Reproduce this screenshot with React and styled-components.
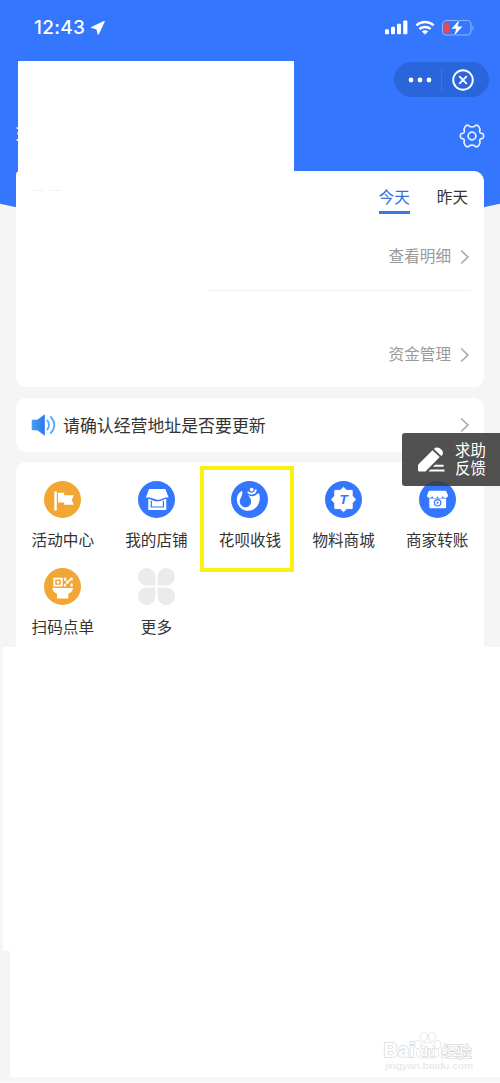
import React from 'react'
import styled, { createGlobalStyle } from 'styled-components'

const BLUE = '#3477fe'
const ORANGE = '#f2a634'

const App = () => {
  return (
    <Page>
      <GlobalStyle />
      <Header>
        <StatusBar>
          <Clock>12:43</Clock>
          <LocationIcon />
          <StatusIcons />
        </StatusBar>
        <TopRow>
          <NameEdge>
            <svg width="3" height="18" viewBox="0 0 3 18" fill="#dfe9ff">
              <circle cx="1.3" cy="3" r="1" />
              <circle cx="2.1" cy="8.5" r="1" />
              <circle cx="1.4" cy="15" r="1.1" />
            </svg>
          </NameEdge>
          <BlankPanel />
          <Actions>
            <Capsule>
              <DotsIcon />
              <i />
              <CloseIcon />
            </Capsule>
            <GearIcon />
          </Actions>
        </TopRow>
      </Header>

      <SummaryCard>
        <Tabs>
          <FaintMark><span /><span /></FaintMark>
          <Tab $active>今天</Tab>
          <Tab>昨天</Tab>
        </Tabs>
        <LinkRow $height={67}><span>查看明细</span> <Chevron /></LinkRow>
        <Divider />
        <LinkRow $height={127}><span>资金管理</span> <Chevron /></LinkRow>
      </SummaryCard>

      <NoticeCard>
        <SpeakerIcon />
        <p>请确认经营地址是否要更新</p>
        <Chevron />
      </NoticeCard>

      <TileCard>
        {tiles.map(({ label, Icon, marked }) => (
          <Tile key={label} $marked={marked}>
            <Icon />
            <span>{label}</span>
          </Tile>
        ))}
      </TileCard>

      <BlankBlock $left={3} $height={304} />
      <BlankBlock $left={10} $height={126} />
      <BottomLine />

      <HelpBadge>
        <PencilIcon />
        <span>求助<br />反馈</span>
      </HelpBadge>
      <Watermark />
    </Page>
  )
}

/* icons */

const LocationIcon = () => (
  <svg width="14" height="14" viewBox="0 0 14 14">
    <path d="M13.200.6 7.200 13.200 6 8 .6 6.500Z" fill="#fff" stroke="#fff" strokeWidth="1.200" strokeLinejoin="round" />
  </svg>
)

const StatusIcons = () => (
  <svg className="status" width="92" height="18" viewBox="0 0 92 18">
    <g fill="#fff">
      <rect x="1" y="10.3" width="4" height="5" rx="1.1" />
      <rect x="7" y="7.8" width="4" height="7.5" rx="1.1" />
      <rect x="13" y="4.7" width="4" height="10.6" rx="1.1" />
      <rect x="19.200" y="1.500" width="4.200" height="13.800" rx="1.100" />
      <path d="m41 15.600-3.200-3.200c1.700-1.500 4.700-1.500 6.400 0Z" />
    </g>
    <g fill="none" stroke="#fff" strokeWidth="2.500">
      <path d="M32.400 6.400c4.900-4.500 12.300-4.500 17.200 0" />
      <path d="M35.400 10c3.100-2.800 8.100-2.800 11.200 0" />
    </g>
    <rect x="58.500" y="1.500" width="28.500" height="14.500" rx="4" fill="none" stroke="#8db3ff" strokeWidth="1.100" />
    <path d="M88.500 6.700v4.400c1.700-.7 1.700-3.700 0-4.400" fill="#8db3ff" />
    <rect x="60.300" y="3.400" width="5" height="10.800" rx="1.800" fill="#f0474f" />
    <path d="M75.500.8 67.500 9.700h4.800l-2.200 7 8.300-9.200h-5Z" fill="#fff" stroke={BLUE} strokeWidth="1.600" paintOrder="stroke" />
  </svg>
)

const DotsIcon = () => (
  <svg width="24" height="6" viewBox="0 0 24 6" fill="#fff">
    <circle cx="3" cy="3" r="2.400" />
    <circle cx="12" cy="3" r="2.400" />
    <circle cx="21" cy="3" r="2.400" />
  </svg>
)

const CloseIcon = () => (
  <svg width="22" height="22" viewBox="0 0 22 22" fill="none" stroke="#fff" strokeWidth="1.900">
    <circle cx="11" cy="11" r="9.800" />
    <path d="m7.700 7.700 6.600 6.600M14.300 7.700l-6.600 6.600" strokeLinecap="round" />
  </svg>
)

const GearIcon = () => (
  <svg className="gear" width="26" height="26" viewBox="0 0 26 26" fill="none" stroke="#e9f1ff" strokeWidth="1.700" strokeLinejoin="round">
    <path d="M7.500 2.300h2c1.100 2.200 5.900 2.200 7 0h2q1.200.5 2.600 3.900c-1.200 2.600-.2 4.300 2.700 4.500 1 .2 1 4.400 0 4.600-2.900.2-3.900 1.900-2.700 4.500q-1.400 3.400-2.600 3.900h-2c-1.100-2.200-5.900-2.200-7 0h-2q-1.200-.5-2.600-3.900c1.200-2.600.2-4.300-2.700-4.500-1-.2-1-4.400 0-4.600 2.900-.2 3.900-1.900 2.700-4.500q1.400-3.400 2.600-3.900Z" />
    <circle cx="13" cy="13" r="3.900" />
  </svg>
)

const Chevron = () => (
  <svg className="chevron" width="10" height="16" viewBox="0 0 10 16" fill="none" stroke="#aaa" strokeWidth="1.700">
    <path d="m1.200 1.500 6.700 6.500-6.700 6.500" />
  </svg>
)

const SpeakerIcon = () => (
  <svg width="26" height="24" viewBox="0 0 26 24">
    <defs>
      <linearGradient id="speaker" x2="1">
        <stop stopColor="#4a9cfa" />
        <stop offset="1" stopColor="#2979ec" />
      </linearGradient>
    </defs>
    <path d="M1.500 6.800h4.800l7.500-5.500v21.400l-7.500-5.500H1.500q-.8 0-.8-.8V7.600q0-.8.8-.8Z" fill="url(#speaker)" />
    <path d="M16.300 7.500c2.300 2.500 2.300 6.500 0 9M19.800 4c4.600 4.500 4.600 11.500 0 16" fill="none" stroke="#5bb0fa" strokeWidth="1.900" strokeLinecap="round" />
  </svg>
)

const Disc = ({ color, children }) => (
  <svg width="37" height="37" viewBox="0 0 37 37">
    <circle cx="18.500" cy="18.500" r="18.500" fill={color} />
    {children}
  </svg>
)

const FlagIcon = () => (
  <Disc color={ORANGE}>
    <path d="M10.300 10.500h2.500v19h-2.500ZM14 11.700h6.200v2.600H30l-2.300 4.900 2.300 4.600h-9.800v-2.400H14Z" fill="#fff" />
  </Disc>
)

const ShopIcon = () => (
  <Disc color={BLUE}>
    <path d="M11 8h16.400l3.200 8.600c-2.700-.2-4.500.2-6.400 1.200-2.500 1.300-5.500 1.300-8.300 0-2.400-1.200-4.900-1.500-8-1.200Z" fill="#fff" />
    <path d="M10.300 17.900c3 0 4.300 2.300 9 2.300s6.200-2.300 9-2.300v11h-18Z" fill="#fff" />
    <path d="M13.300 19.800v6.200h12.100v-6.200" fill="none" stroke={BLUE} strokeWidth="1.200" />
  </Disc>
)

const HuabeiIcon = () => (
  <Disc color={BLUE}>
    <path d="M9.900 10.400C5.800 13.200 4.900 18.400 6.700 22.800c2.400 6.200 9.300 8.600 15 6 5.500-2.600 8-8.600 6.800-14.800-.3-1.600-1.700-1.800-2.700-.8-2.600 2.600-6.200 2.700-9.800.4 3.100 2.100 4.700 5.400 4 8.400-.9 3.700-4.700 5.300-7.900 3.800-3.200-1.500-4.200-5-2.600-8.300 1.300-2.700 1.900-4.500 1.900-6.100 0-1.200-.7-1.700-1.500-1Z" fill="#fff" />
    <path d="M17.300 11.300c1.500 2.400 6.900 1.700 7.600-2.300" fill="none" stroke="#fff" strokeWidth="1.700" strokeLinecap="round" />
    <circle cx="20.700" cy="8.600" r="1.900" fill="#fff" />
  </Disc>
)

const MaterialIcon = () => (
  <Disc color={BLUE}>
    <path
      d="m18.500 6.300 3.300 3.100h5.400v5.400l3.300 3.700-3.300 3.700v5.400h-5.400l-3.300 3.100-3.300-3.100H9.800v-5.400l-3.300-3.700 3.300-3.700V9.400h5.400Z"
      fill="#fff" stroke="#fff" strokeLinejoin="round"
    />
    <text x="18.500" y="23" textAnchor="middle" fill={BLUE} fontFamily="Liberation Sans, sans-serif" fontSize="13.500" fontWeight="700" fontStyle="italic">T</text>
  </Disc>
)

const TransferIcon = () => (
  <Disc color={BLUE}>
    <path d="M10 9.800h17l1.900 4.300a2.600 2.600 0 0 1-5.200.5 2.600 2.600 0 0 1-5.200 0 2.600 2.600 0 0 1-5.200 0 2.600 2.600 0 0 1-5.200-.5Z" fill="#fff" />
    <path d="M10.300 17.600h16.800v8.400q0 1.200-1.200 1.200H11.500q-1.200 0-1.200-1.200Z" fill="#fff" />
    <circle cx="18.600" cy="21.800" r="3.200" fill="none" stroke={BLUE} strokeWidth="1.200" />
    <path d="M17.300 21.800h2.600M18.600 20.300v3" stroke={BLUE} strokeWidth=".8" />
  </Disc>
)

const BowlIcon = () => (
  <Disc color={ORANGE}>
    <path d="M10.300 10.600h7.500v7.100h-7.500Z" fill="none" stroke="#fff" strokeWidth="1.800" />
    <path d="M12.800 12.900h2.500v2.500h-2.500ZM20 9.800h2.200v3H20ZM22.200 12.800h2.300v3h-2.300ZM20 15.800h2.200v2.700H20ZM26 9.800h2.700v2.500H26ZM24.500 11.500h2v2h-2ZM26.500 15.500h2.200v3h-2.200Z" fill="#fff" />
    <path d="M8.300 20h20.600c-.2 3-1.700 4.700-4.600 5.800v4.700H13v-4.700c-2.900-1.100-4.500-2.800-4.700-5.800Z" fill="#fff" />
  </Disc>
)

const MoreIcon = () => (
  <svg width="37" height="37" viewBox="0 0 37 37" fill="#ebebeb">
    <path d="M8.800 0a8.700 8.700 0 0 1 8.700 8.700v8.800H8.800A8.750 8.750 0 0 1 8.800 0Z" />
    <path d="M28.200 0a8.750 8.750 0 0 1 0 17.500h-8.700V8.700A8.700 8.700 0 0 1 28.200 0Z" />
    <path d="M8.800 19.500h8.700v8.800A8.750 8.750 0 1 1 8.800 19.500Z" />
    <path d="M19.500 19.500h8.700a8.750 8.750 0 1 1-8.700 8.800Z" />
  </svg>
)

const PencilIcon = () => (
  <svg width="28" height="28" viewBox="0 0 28 28" fill="#fff">
    <path d="M15.500 4.300 22.700 11 8.500 25.400H2.200q-1.200 0-1.200-1.200v-5.500Z" />
    <path d="M17 3.100c3.700-5 12.700 3.100 7.200 6.800Z" />
    <path d="M18 18.700h8.600v2.100H16ZM13.500 23.400h14v2.200H11.500Z" />
  </svg>
)

const tiles = [
  { label: '活动中心', Icon: FlagIcon },
  { label: '我的店铺', Icon: ShopIcon },
  { label: '花呗收钱', Icon: HuabeiIcon, marked: true },
  { label: '物料商城', Icon: MaterialIcon },
  { label: '商家转账', Icon: TransferIcon },
  { label: '扫码点单', Icon: BowlIcon },
  { label: '更多', Icon: MoreIcon },
]

const Watermark = () => (
  <WatermarkBox width="96" height="48" viewBox="0 0 96 48">
    <g fill="#fff" stroke="#e0e0e0" strokeWidth=".8">
      <ellipse cx="37" cy="19.500" rx="3.300" ry="4.300" />
      <ellipse cx="42.800" cy="11.800" rx="3.500" ry="4.700" />
      <ellipse cx="50.800" cy="11.800" rx="3.500" ry="4.700" />
      <ellipse cx="56.500" cy="19.500" rx="3.300" ry="4.300" />
      <path d="M46.800 17.500c4.500 0 5.500 4 9 7 4 3.600 2 8.500-3 8.500H40.500c-5 0-7-5-3-8.500 3.500-3 4.800-7 9.300-7Z" />
    </g>
    <g fill="#fff" stroke="#d8d8d8" strokeWidth="1.400" paintOrder="stroke">
      <text x="2.500" y="32" fontSize="19.500" fontWeight="700" textLength="31" lengthAdjust="spacingAndGlyphs">Bai</text>
      <text x="39.500" y="31" fontSize="12.500" fontWeight="700" textLength="14.500" lengthAdjust="spacingAndGlyphs">du</text>
      <text x="60.500" y="31.500" fontSize="15" textLength="30" fontWeight="500">经验</text>
    </g>
    <text x="4" y="44" fontSize="9.500" fill="#e4e4e4" textLength="88" lengthAdjust="spacingAndGlyphs">jingyan.baidu.com</text>
  </WatermarkBox>
)

/* styles */

const GlobalStyle = createGlobalStyle`
  body {
    margin: 0;
    background: #f5f5f5;
  }
  *, *::before, *::after {
    box-sizing: border-box;
  }
  svg {
    display: block;
    flex: none;
  }
  p {
    margin: 0;
  }
`

const Page = styled.div`
  position: relative;
  width: 500px;
  height: 1083px;
  overflow: hidden;
  display: flex;
  flex-direction: column;
  background: #f5f5f5;
  color: #333;
  font-family: 'Liberation Sans', 'Noto Sans CJK SC', sans-serif;
  z-index: 0;
`

const Header = styled.header`
  height: 171px;
  flex: none;
  &::before {
    content: '';
    position: absolute;
    top: 0;
    left: 0;
    z-index: -1;
    width: 100%;
    height: 232px;
    background: ${BLUE};
    clip-path: circle(1163px at 50% -932px);
  }
`

const StatusBar = styled.div`
  display: flex;
  height: 61px;
  padding: 0 24px 6px 34px;
  align-items: center;
  gap: 6px;
  .status {
    margin-left: auto;
  }
`

const Clock = styled.span`
  width: 51px;
  color: #fff;
  font: 500 19px/22px Inter, sans-serif;
  letter-spacing: 0.3px;
`

const TopRow = styled.div`
  display: flex;
  height: 110px;
  padding-left: 16px;
`

const NameEdge = styled.div`
  width: 2px;
  padding-top: 64px;
  overflow: hidden;
`

const BlankPanel = styled.div`
  width: 276px;
  background: #fff;
`

const Actions = styled.div`
  flex: 1;
  display: flex;
  flex-direction: column;
  align-items: flex-end;
  gap: 26px;
  padding: 1px 11px 0 0;
  .gear {
    margin-right: 4px;
  }
`

const Capsule = styled.div`
  display: flex;
  align-items: center;
  justify-content: space-between;
  width: 95px;
  height: 35px;
  padding: 0 15px 0 14px;
  border-radius: 18px;
  background: #2b65dc;
  i {
    width: 1px;
    height: 24px;
    margin-left: -1px;
    background: #3f74e0;
  }
`

const Card = styled.section`
  flex: none;
  margin: 0 16px;
  border-radius: 10px;
  background: #fff;
`

const SummaryCard = styled(Card)`
  height: 216px;
  padding-right: 14px;
  border-top-left-radius: 4px;
`

const Tabs = styled.div`
  display: flex;
  gap: 27px;
  padding: 15px 2px 0 17px;
  height: 52px;
`

const FaintMark = styled.div`
  display: flex;
  gap: 6px;
  margin: 4px auto 0 0;
  span {
    width: 11px;
    height: 1px;
    background: #f1f1f1;
  }
`

const Tab = styled.div`
  height: 28px;
  font-size: 15.6px;
  line-height: 24px;
  color: ${p => (p.$active ? '#2f72dc' : '#333')};
  border-bottom: 3px solid ${p => (p.$active ? '#3a78dd' : 'transparent')};
`

const LinkRow = styled.div`
  display: flex;
  height: ${p => p.$height}px;
  align-items: center;
  justify-content: flex-end;
  gap: 9px;
  font-size: 15.6px;
  line-height: 23px;
  color: #999;
`

const Divider = styled.div`
  height: 1px;
  width: 262px;
  margin-left: auto;
  background: #f0f0f0;
`

const NoticeCard = styled(Card)`
  display: flex;
  align-items: center;
  height: 54px;
  margin-top: 11px;
  padding: 0 14px 0 15px;
  font-size: 16.9px;
  p {
    margin-left: 6px;
    padding-bottom: 2px;
  }
  .chevron {
    margin-left: auto;
  }
`

const TileCard = styled(Card)`
  display: grid;
  grid-template-columns: repeat(5, 1fr);
  grid-auto-rows: 87px;
  height: 185px;
  margin-top: 10px;
  padding-top: 19px;
  border-radius: 10px 10px 0 0;
`

const Tile = styled.div`
  position: relative;
  display: flex;
  flex-direction: column;
  align-items: center;
  gap: 10px;
  font-size: 15.6px;
  line-height: 26px;
  ${p => p.$marked && `
    &::after {
      content: '';
      position: absolute;
      top: -15px;
      left: -3px;
      width: 94px;
      height: 106px;
      border: 4px solid #fcf010;
    }
  `}
`

const BlankBlock = styled.div`
  flex: none;
  height: ${p => p.$height}px;
  margin-left: ${p => p.$left}px;
  background: #fff;
`

const BottomLine = styled.div`
  height: 6px;
  background: linear-gradient(#f5f5f5 3px, #fcfcfc);
`

const HelpBadge = styled.div`
  position: absolute;
  top: 433px;
  right: 0;
  display: flex;
  align-items: center;
  gap: 10px;
  width: 98px;
  height: 53px;
  padding-left: 15px;
  border-radius: 3px 0 0 3px;
  background: rgba(62, 62, 62, 0.9);
  color: #fff;
  font-size: 15.4px;
  line-height: 18.5px;
  span {
    padding-top: 1px;
  }
`

const WatermarkBox = styled.svg`
  position: absolute;
  left: 381px;
  top: 1025px;
  font-family: 'Liberation Sans', 'Noto Sans CJK SC', sans-serif;
`

export default App
